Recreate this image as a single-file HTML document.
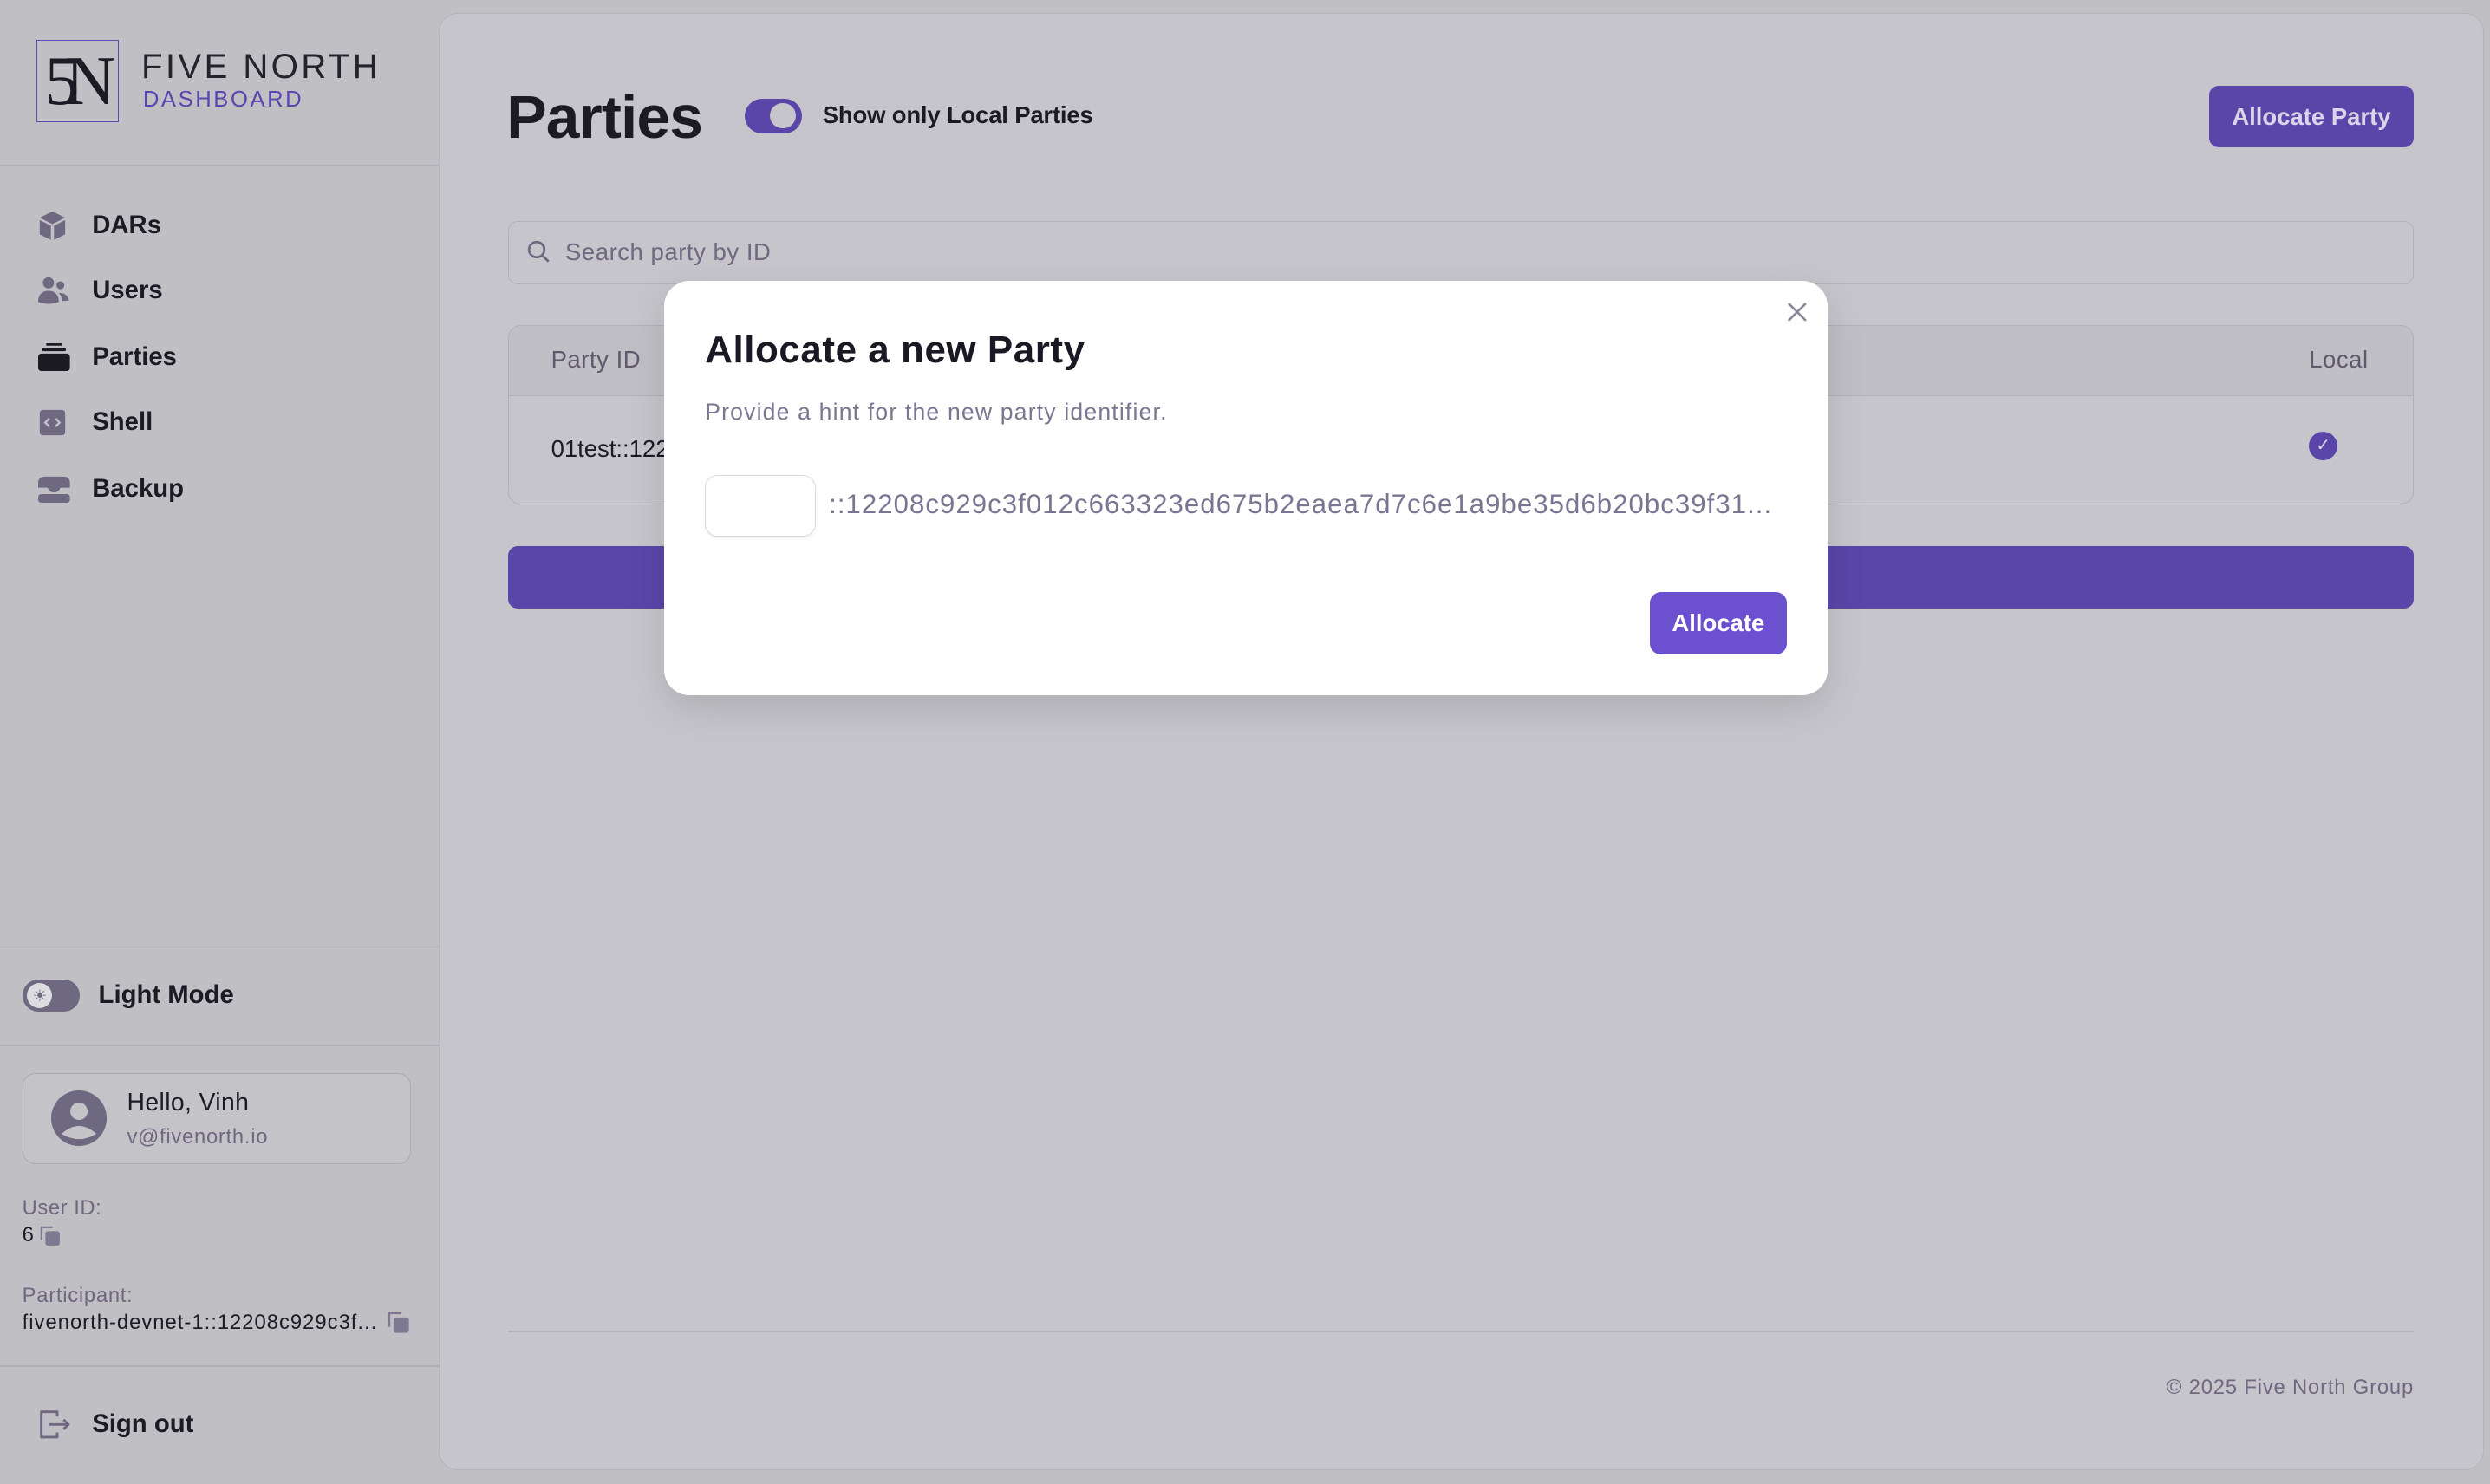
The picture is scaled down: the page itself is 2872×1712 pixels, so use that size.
<!DOCTYPE html>
<html><head><meta charset="utf-8"><style>
*{box-sizing:border-box;margin:0;padding:0}
html,body{width:2872px;height:1712px;overflow:hidden;background:#c0bfc4}
#root{zoom:1.83163;width:1568px;height:935px;position:relative;font-family:"Liberation Sans",sans-serif;color:#1c1b24}
.a{position:absolute}
.side{left:0;top:0;width:276px;height:935px;background:#c0bfc4}
.hr{position:absolute;left:0;width:276px;height:1px;background:#b0afb6}
.nav{left:24px;font-size:16px;font-weight:bold;display:flex;align-items:center;height:20px}
.nav span{position:absolute;left:34px;white-space:nowrap}
.main{left:276px;top:8px;width:1288px;height:918px;background:#c6c5cb;border:1px solid #b4b3ba;border-radius:12px}
.purple{background:#5a46a8}
</style></head><body><div id="root">
<div class="a side"></div>
<!-- logo -->
<div class="a" style="left:23px;top:25px;width:52px;height:52px;border:1px solid #5b48b0"></div>
<div class="a" style="left:28px;top:26px;font-family:'Liberation Serif',serif;font-size:44px;color:#1c1b24;letter-spacing:-9px;line-height:50px">5N</div>
<div class="a" style="left:89px;top:29px;font-size:22px;letter-spacing:1.8px;color:#24232c;line-height:26px">FIVE NORTH</div>
<div class="a" style="left:90px;top:55px;font-size:14px;letter-spacing:1.4px;color:#5a46b0;line-height:16px">DASHBOARD</div>
<div class="hr" style="top:104px"></div>
<!-- nav -->
<div class="a nav" style="top:132px"><svg width="18" height="20" viewBox="0 0 18 20"><path d="M9 1L17 5L9 9L1 5Z" fill="#6e6880"/><path d="M1 6.5L8 10V19L1 15.5Z M10 10L17 6.5V15.5L10 19Z" fill="#6e6880"/></svg><span>DARs</span></div>
<div class="a nav" style="top:173px"><svg width="20" height="18" viewBox="0 0 20 18"><circle cx="6.5" cy="4" r="3.5" fill="#6e6880"/><circle cx="14" cy="5.5" r="2.5" fill="#6e6880"/><path d="M0 16C0 11 3 9 6.5 9S13 11 13 16Q6.5 18.5 0 16Z" fill="#6e6880"/><path d="M13 10.5Q18 10 19.5 15L15 15.5Q15 12.5 13 10.5Z" fill="#6e6880"/></svg><span>Users</span></div>
<div class="a nav" style="top:215px"><svg width="20" height="18" viewBox="0 0 20 18"><rect x="5" y="0" width="10" height="1.5" rx=".7" fill="#1c1b24"/><rect x="2.5" y="3" width="15" height="2" rx="1" fill="#1c1b24"/><rect x="0" y="6.5" width="20" height="11" rx="2" fill="#1c1b24"/></svg><span>Parties</span></div>
<div class="a nav" style="top:256px"><svg width="18" height="18" viewBox="0 0 18 18"><rect x="1" y="1" width="16" height="16" rx="2" fill="#6e6880"/><path d="M7 6.5L4.5 9L7 11.5M11 6.5L13.5 9L11 11.5" stroke="#c0bfc4" stroke-width="1.4" fill="none"/></svg><span>Shell</span></div>
<div class="a nav" style="top:298px"><svg width="20" height="18" viewBox="0 0 20 18"><path d="M0 8V5Q0 1 4 1H16Q20 1 20 5V8H14Q13 11 10 11T6 8Z" fill="#6e6880"/><rect x="0" y="12" width="20" height="5.5" rx="2" fill="#6e6880"/></svg><span>Backup</span></div>
<div class="hr" style="top:596px"></div>
<div class="a" style="left:14px;top:617px;width:36px;height:20px;border-radius:10px;background:#6e6880"></div>
<div class="a" style="left:17px;top:619px;width:16px;height:16px;border-radius:50%;background:#dcdbe0;text-align:center;font-size:10px;line-height:16px;color:#6e6880">☀</div>
<div class="a" style="left:62px;top:617px;font-size:16px;font-weight:bold;line-height:20px">Light Mode</div>
<div class="hr" style="top:658px"></div>
<div class="a" style="left:14px;top:676px;width:245px;height:57px;border:1px solid #adacb3;border-radius:8px;background:#c4c3c8"></div>
<svg class="a" style="left:32px;top:687px" width="35" height="35" viewBox="0 0 32 32"><circle cx="16" cy="16" r="16" fill="#6e6880"/><circle cx="16" cy="12" r="5" fill="#c4c3c8"/><path d="M6 25Q16 16 26 25Q16 31 6 25Z" fill="#c4c3c8"/></svg>
<div class="a" style="left:80px;top:686px;font-size:15.5px;line-height:18px;letter-spacing:.2px">Hello, Vinh</div>
<div class="a" style="left:80px;top:708px;font-size:13px;color:#6e6880;line-height:16px;letter-spacing:.4px">v@fivenorth.io</div>
<div class="a" style="left:14px;top:753px;font-size:13px;color:#6e6880;line-height:16px;letter-spacing:.3px">User ID:</div>
<div class="a" style="left:14px;top:770px;font-size:13px;line-height:16px">6</div>
<svg class="a" style="left:25px;top:772px" width="13" height="13" viewBox="0 0 13 13"><path d="M1 9V1H8" stroke="#7e7890" stroke-width="1.2" fill="none"/><rect x="3.5" y="3.5" width="9" height="9" rx="1.5" fill="#7e7890"/></svg>
<div class="a" style="left:14px;top:808px;font-size:13px;color:#6e6880;line-height:16px;letter-spacing:.4px">Participant:</div>
<div class="a" style="left:14px;top:825px;font-size:13px;line-height:16px;letter-spacing:.55px">fivenorth-devnet-1::12208c929c3f...</div>
<svg class="a" style="left:244px;top:826px" width="14" height="14" viewBox="0 0 13 13"><path d="M1 9V1H8" stroke="#7e7890" stroke-width="1.2" fill="none"/><rect x="3.5" y="3.5" width="9" height="9" rx="1.5" fill="#7e7890"/></svg>
<div class="hr" style="top:860px"></div>
<svg class="a" style="left:24px;top:887px" width="21" height="20" viewBox="0 0 21 20"><path d="M12 5V2H2V18H12V15" stroke="#6e6880" stroke-width="1.6" fill="none" stroke-linejoin="round"/><path d="M7 10H19M16 7L19 10L16 13" stroke="#6e6880" stroke-width="1.6" fill="none"/></svg>
<div class="a" style="left:58px;top:887px;font-size:16px;font-weight:bold;line-height:20px">Sign out</div>

<!-- main -->
<div class="a main"></div>
<div class="a" style="left:319px;top:51px;font-size:38px;font-weight:bold;line-height:46px;letter-spacing:-.5px">Parties</div>
<div class="a purple" style="left:469px;top:62px;width:36px;height:22px;border-radius:11px"></div>
<div class="a" style="left:485px;top:65px;width:16px;height:16px;border-radius:50%;background:#c6c5cb"></div>
<div class="a" style="left:518px;top:64px;font-size:15px;font-weight:bold;line-height:18px;letter-spacing:-.1px">Show only Local Parties</div>
<div class="a purple" style="left:1391px;top:54px;width:129px;height:39px;border-radius:6px;color:#d9d5ea;font-size:15px;font-weight:bold;text-align:center;line-height:39px">Allocate Party</div>
<div class="a" style="left:320px;top:139px;width:1200px;height:40px;border:1px solid #b1b0b7;border-radius:6px"></div>
<svg class="a" style="left:332px;top:151px" width="15" height="15" viewBox="0 0 15 15"><circle cx="6" cy="6" r="4.8" stroke="#6e6880" stroke-width="1.5" fill="none"/><path d="M9.5 9.5L13.5 13.5" stroke="#6e6880" stroke-width="1.5"/></svg>
<div class="a" style="left:356px;top:150px;font-size:15px;color:#6e6880;line-height:18px;letter-spacing:.3px">Search party by ID</div>
<div class="a" style="left:320px;top:205px;width:1200px;height:113px;border:1px solid #b1b0b7;border-radius:8px;overflow:hidden"><div style="height:44px;background:#c0bfc5;border-bottom:1px solid #b1b0b7"></div></div>
<div class="a" style="left:347px;top:218px;font-size:15px;color:#5e5a6c;line-height:18px;letter-spacing:.3px">Party ID</div>
<div class="a" style="left:1454px;top:218px;font-size:15px;color:#5e5a6c;line-height:18px;letter-spacing:.3px">Local</div>
<div class="a" style="left:347px;top:274px;font-size:15px;line-height:18px">01test::122</div>
<div class="a purple" style="left:1454px;top:272px;width:18px;height:18px;border-radius:50%;color:#d9d5ea;font-size:11px;text-align:center;line-height:18px">✓</div>
<div class="a purple" style="left:320px;top:344px;width:1200px;height:39px;border-radius:6px"></div>
<div class="a" style="left:320px;top:838px;width:1200px;height:1px;background:#b1b0b7"></div>
<div class="a" style="left:1300px;top:866px;width:220px;text-align:right;font-size:13px;color:#6e6880;line-height:16px;letter-spacing:.45px">© 2025 Five North Group</div>

<!-- modal -->
<div class="a" style="left:418px;top:177px;width:733px;height:261px;background:#fff;border-radius:16px;box-shadow:0 8px 24px rgba(0,0,0,.12)"></div>
<svg class="a" style="left:1125px;top:190px" width="13" height="13" viewBox="0 0 13 13"><path d="M1 1L12 12M12 1L1 12" stroke="#8a8698" stroke-width="1.4"/></svg>
<div class="a" style="left:444px;top:206px;font-size:24px;font-weight:bold;line-height:30px;color:#1a1923;letter-spacing:.3px">Allocate a new Party</div>
<div class="a" style="left:444px;top:251px;font-size:14.5px;color:#7a7590;line-height:17px;letter-spacing:.65px">Provide a hint for the new party identifier.</div>
<div class="a" style="left:444px;top:299px;width:70px;height:39px;border:1px solid #dad9e0;border-radius:8px;box-shadow:0 1px 2px rgba(0,0,0,.06)"></div>
<div class="a" style="left:522px;top:308px;font-size:17px;color:#7a7590;line-height:20px;letter-spacing:.58px">::12208c929c3f012c663323ed675b2eaea7d7c6e1a9be35d6b20bc39f31...</div>
<div class="a" style="left:1039px;top:373px;width:86px;height:39px;border-radius:7px;background:#6b50d0;color:#fff;font-size:15px;font-weight:bold;text-align:center;line-height:39px">Allocate</div>
</div></body></html>
